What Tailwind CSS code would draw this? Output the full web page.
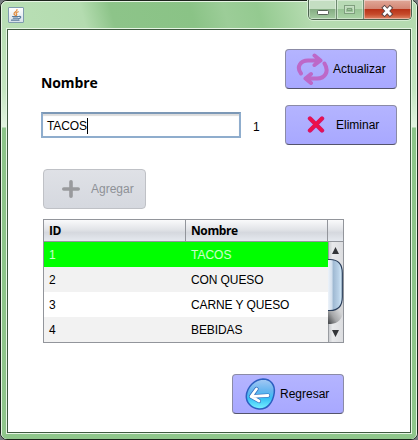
<!DOCTYPE html>
<html lang="es">
<head>
<meta charset="utf-8">
<title>Nombre</title>
<script src="https://cdn.jsdelivr.net/npm/@tailwindcss/browser@4"></script>
</head>
<body class="w-[418px] h-[440px] overflow-hidden bg-[#777b80] font-['Liberation_Sans',Arial,sans-serif] text-[12px] leading-[14px] text-black">
<div class="w-[418px] h-[440px] rounded-[7px] border border-[#1c241c] bg-[#e6f5e4]">
<div class="w-full h-full rounded-[6px] border border-[#e6f5e4] flex flex-col bg-[#b5dbb0]">
  <header class="h-[27px] shrink-0 flex justify-between pl-[6px] pr-[4px] rounded-t-[5px] bg-[linear-gradient(75deg,#b9dfb5_0,#b4dcb0_20%,#8dc489_27%,#8ac386_46%,#9ccd98_54%,#94ca90_62%,#b5dbb0_74%,#b5dbb0_100%)]">
    <div class="mt-[5px] w-4 h-4 border border-[#7f9cae] rounded-[1px] bg-linear-to-b from-white to-[#d8e2ea]">
      <svg class="block" width="14" height="14" viewBox="0 0 14 14" fill="none" stroke-linecap="round">
        <path d="M8 1.5C8.5 3.5 4.5 4 5 6C5.2 6.8 6 7 6.3 7.4M9.3 3.8C7 4.7 6.7 5.2 7.6 6.2C8 6.8 7.7 7.2 7.4 7.5" stroke="#e08a3c" stroke-width="1.2"/>
        <path d="M3.5 8.5H9.3M4.3 10.2H8.6M2.5 12.2H10M9.8 8.5C12.6 7.8 12.2 10.4 9.7 10.6" stroke="#587a9b" stroke-width="1.2"/>
      </svg>
    </div>
    <div class="-mt-[2px] flex w-[104px] h-[20px] rounded-b-[5px] border border-t-0 border-[#4d6450] shadow-[0_0_0_1px_#d5edd2] overflow-hidden">
      <div class="w-[28px] border-r border-[#6e8a70] bg-[linear-gradient(#c4dec2_0_50%,#86ad84_50%,#a5cda2)] shadow-[inset_0_0_0_1px_#ffffff66]">
        <svg class="block" width="27" height="20"><rect x="8.5" y="10.5" width="11" height="4" rx="1" fill="#fff" stroke="#566256"/></svg>
      </div>
      <div class="w-[27px] border-r border-[#6e8a70] bg-[linear-gradient(#b8dab5_0_50%,#98c495_50%,#abd4a7)] shadow-[inset_0_0_0_1px_#ffffff66]">
        <svg class="block" width="26" height="20" fill="none"><rect x="7.5" y="5.5" width="10" height="8" stroke="#7f9f7e"/><rect x="8.5" y="6.5" width="8" height="6" stroke="#c8dfc6"/><rect x="10.5" y="8.5" width="4" height="2" stroke="#7f9f7e"/></svg>
      </div>
      <div class="flex-1 bg-[linear-gradient(#e0a898_0,#d38573_48%,#b83318_50%,#c64a2b_75%,#df8665)] shadow-[inset_0_0_0_1px_#ffffff66]">
        <svg class="block" width="46" height="20" fill="none"><path d="M20.5 8L26 14M26 8L20.5 14" stroke="#564444" stroke-width="4.6" stroke-linecap="square"/><path d="M20.5 8L26 14M26 8L20.5 14" stroke="#fff" stroke-width="2.8" stroke-linecap="square"/></svg>
      </div>
    </div>
  </header>
  <div class="flex-1 flex justify-center pb-[5px] bg-[linear-gradient(#b8deb4_0,#c4e5c0_60px,#e2f3e0_98px,#8cc489_99px,#8fc68b_100%)] rounded-b-[5px]">
    <div class="w-[406px] h-[406px] -mt-px border border-[#e6f5e4]">
    <main class="w-[404px] h-[404px] border border-[#3f5a40] bg-white flex flex-col">
      <div class="flex justify-between pl-[33px] pr-[13px] pt-[19px]">
        <div class="flex flex-col">
          <div class="mt-[25px] h-[18px] text-[14px] leading-[18px] font-bold font-['Open_Sans','Noto_Sans',sans-serif] whitespace-nowrap tracking-[-0.1px]">Nombre</div>
          <div class="mt-[20px] flex items-center">
            <div class="w-[200px] h-[26px] border-2 border-[#8fadcd] border-t-[#7c98b6] shadow-[inset_0_2px_1px_#dcdcdc] flex items-center pl-[4px] pt-[1px]"><span class="tracking-[-0.1px]">TACOS</span><span class="w-px h-[16px] bg-black"></span></div>
            <span class="ml-[12px] pt-[3px]">1</span>
          </div>
        </div>
        <div class="flex flex-col gap-[16px]">
          <button class="w-[112px] h-[40px] rounded-[4px] border border-[#8b8ba6] border-b-[#54546c] bg-linear-to-b from-[#b4b4ff] to-[#a8a8ff] flex items-center pl-[10px] gap-[4px]">
            <svg width="33" height="34" viewBox="0 0 33 34" fill="none" stroke="#bd68c8" stroke-width="4" stroke-linecap="round" stroke-linejoin="round"><path d="M5 21.5C0 15 4.5 8.5 12 8.5H23M18.5 3.5L24.5 8.5L18.500 13M28.5 11.500C33.500 19.500 29 26.500 21 26.500H10.500M15 22L9.500 26.500L15 31"/></svg>
            <span>Actualizar</span>
          </button>
          <button class="w-[112px] h-[40px] rounded-[4px] border border-[#8b8ba6] border-b-[#54546c] bg-linear-to-b from-[#b4b4ff] to-[#a8a8ff] flex items-center pl-[21px] gap-[11px]">
            <svg width="18" height="18" viewBox="0 0 18 18" fill="none"><path d="M3 2.5L15 14.5M15 2.5L3 14.5" stroke="#d51468" stroke-width="4.4" stroke-linecap="round"/><path d="M3 2.500L14.500 14M14.500 2.500L3 14" stroke="#ec1248" stroke-width="2.600" stroke-linecap="round"/></svg>
            <span>Eliminar</span>
          </button>
        </div>
      </div>
      <button class="ml-[35px] mt-[24px] w-[103px] h-[40px] rounded-[4px] border border-[#bfc1c6] bg-linear-to-b from-[#dfe1e6] to-[#d5d8df] flex items-center pl-[18px] gap-[11px] text-[#8e9197]">
        <svg width="18" height="18" viewBox="0 0 18 18"><path d="M9 1.8V16.2M1.8 9H16.2" stroke="#999a9d" stroke-width="3.6" stroke-linecap="round"/></svg>
        <span>Agregar</span>
      </button>
      <section class="ml-[35px] mt-[10px] w-[301px] h-[124px] border border-[#92959b] flex flex-col">
        <div class="h-[22px] flex border-b border-[#92959b] bg-[linear-gradient(#fafafb_0,#e2e4e8_45%,#d5d8de_60%,#e5e9ef)] font-bold leading-[22px] tracking-[-0.4px] font-['Open_Sans','Noto_Sans',sans-serif]">
          <div class="w-[142px] pl-[5px] border-r border-[#92959b]">ID</div>
          <div class="w-[142px] pl-[5px] border-r border-[#92959b]">Nombre</div>
        </div>
        <div class="flex h-[100px]">
          <div class="w-[284px] leading-[26px]">
            <div class="flex h-[25px] bg-[#00ff00] text-white/80"><span class="w-[142px] pl-[5px]">1</span><span class="pl-[5px]">TACOS</span></div>
            <div class="flex h-[25px] bg-[#f2f2f2]"><span class="w-[142px] pl-[5px]">2</span><span class="pl-[5px] tracking-[-0.1px]">CON QUESO</span></div>
            <div class="flex h-[25px]"><span class="w-[142px] pl-[5px]">3</span><span class="pl-[5px] tracking-[-0.1px]">CARNE Y QUESO</span></div>
            <div class="flex h-[25px] bg-[#f2f2f2]"><span class="w-[142px] pl-[5px]">4</span><span class="pl-[5px] tracking-[-0.1px]">BEBIDAS</span></div>
          </div>
          <svg class="block" width="15" height="100" viewBox="0 0 15 100">
            <defs>
              <linearGradient id="track"><stop offset="0" stop-color="#c4c6ca"/><stop offset=".3" stop-color="#e8e9eb"/><stop offset="1" stop-color="#dcdde0"/></linearGradient>
              <linearGradient id="thumb"><stop offset="0" stop-color="#edf3fa"/><stop offset=".28" stop-color="#d2dfed"/><stop offset=".36" stop-color="#9fb9d2"/><stop offset=".75" stop-color="#bad2e8"/><stop offset="1" stop-color="#d8effc"/></linearGradient>
              <linearGradient id="shade" x1="1" y1="0" x2="0" y2="1"><stop offset=".3" stop-color="#d4d5d7"/><stop offset=".65" stop-color="#a5a6a8"/><stop offset=".95" stop-color="#4d4f52"/></linearGradient>
            </defs>
            <rect width="15" height="100" fill="url(#track)"/>
            <path d="M0 60H15V72C12 80 8 82 0 82Z" fill="url(#shade)"/>
            <path d="M0 17.5H2C10 17.5 14.3 22 14.3 31V55C14.3 64 10 68.5 2 68.5H0Z" fill="url(#thumb)"/>
            <path d="M0 17.5H2C10 17.5 14.3 22 14.3 31V55C14.3 64 10 68.5 2 68.5H0" fill="none" stroke="#293d5a" stroke-width="1.2"/>
            <path d="M4 12L7.5 5L11 12ZM4 88L7.5 95L11 88Z" fill="#333538"/>
            <path d="M.5 0V17M.5 82V100" stroke="#999ca1"/>
          </svg>
        </div>
      </section>
      <button class="ml-[224px] mt-[31px] w-[112px] h-[40px] rounded-[4px] border border-[#8b8ba6] border-b-[#54546c] bg-linear-to-b from-[#b4b4ff] to-[#a8a8ff] flex items-center pl-[12px] gap-[4px]">
        <svg width="31" height="34" viewBox="0 0 31 34">
          <defs><linearGradient id="orb" x1="0" y1="0" x2="0" y2="1"><stop offset="0" stop-color="#a5c9f4"/><stop offset=".4" stop-color="#65b4ef"/><stop offset=".65" stop-color="#38c0f5"/><stop offset="1" stop-color="#7af3ff"/></linearGradient></defs>
          <path d="M18 2C26 2 30 8 29.3 15.5C28 26 22 32.5 14 32C6 31.5 1 25 1.3 19C2 10 9.5 2.5 18 2Z" fill="url(#orb)" stroke="#2c5fc0" stroke-width="1.5"/>
          <path d="M11.5 12L6 19.5L14 24M7 19.300L23 18.500" fill="none" stroke="#2e68bb" stroke-width="4.2" stroke-linecap="round" stroke-linejoin="round"/>
          <path d="M11.5 12L6 19.5L14 24M7 19.300L23 18.500" fill="none" stroke="#fff" stroke-width="2.8" stroke-linecap="round" stroke-linejoin="round"/>
        </svg>
        <span>Regresar</span>
      </button>
    </main>
    </div>
  </div>
</div>
</div>
</body>
</html>
